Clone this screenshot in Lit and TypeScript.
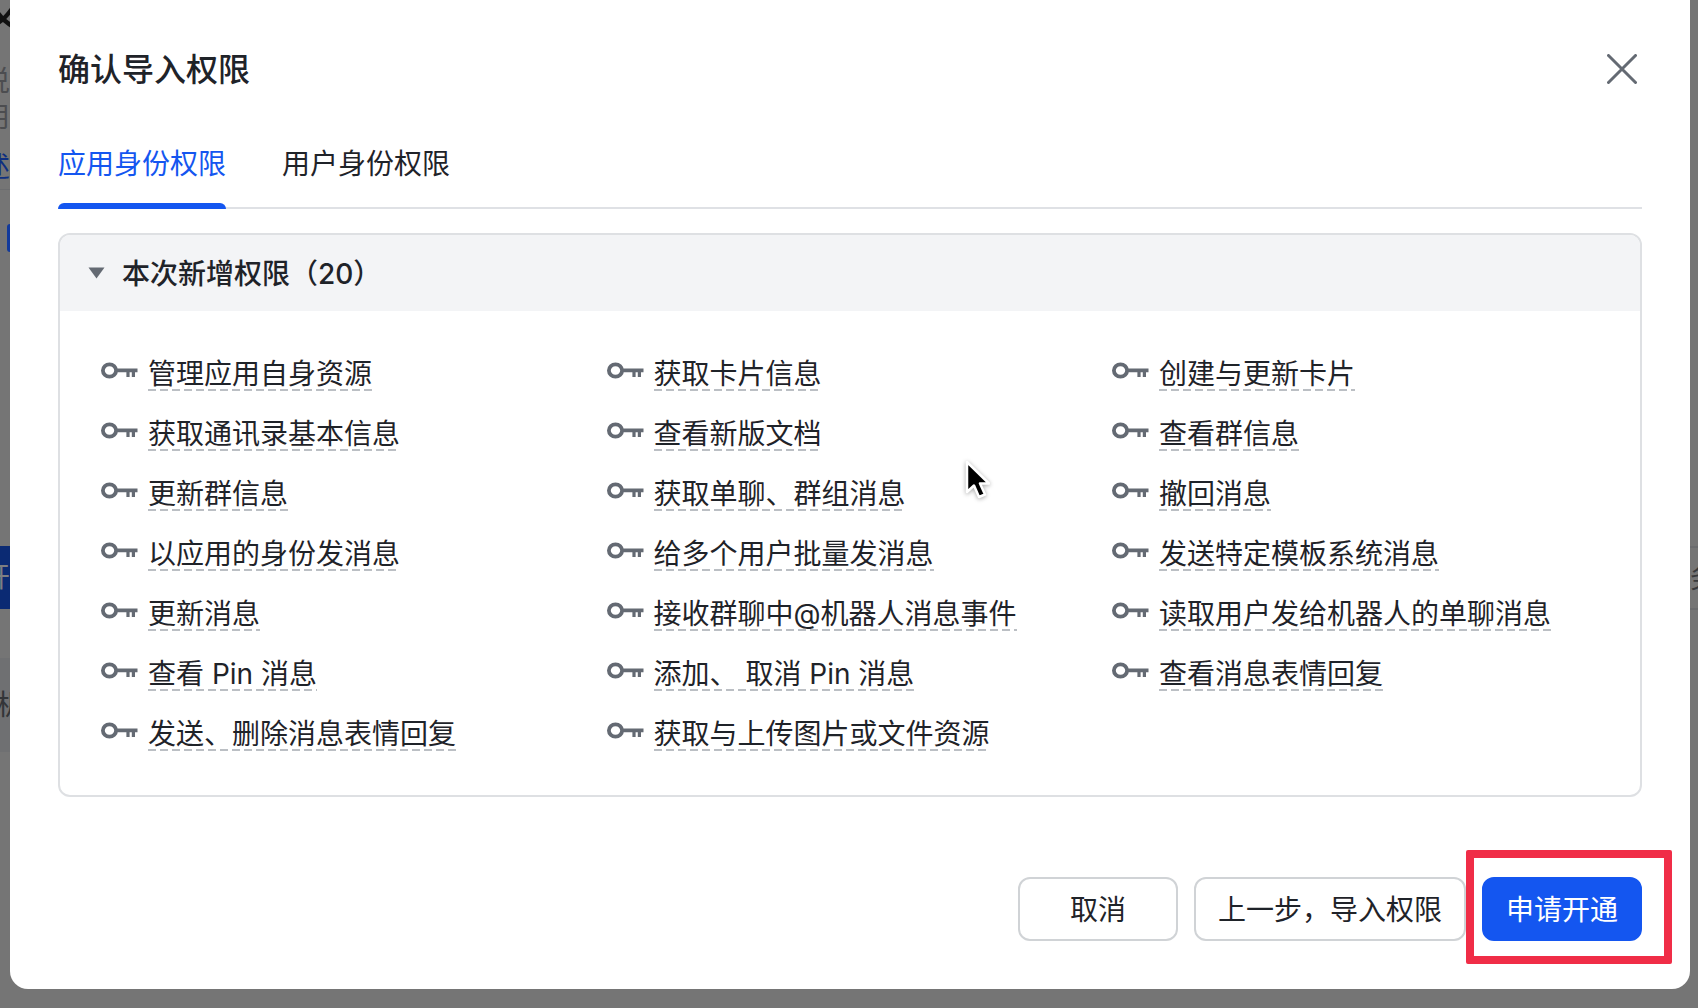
import { LitElement, html, css, svg } from "lit";
import { customElement } from "lit/decorators.js";

const ITEMS = [
  "管理应用自身资源", "获取卡片信息", "创建与更新卡片",
  "获取通讯录基本信息", "查看新版文档", "查看群信息",
  "更新群信息", "获取单聊、群组消息", "撤回消息",
  "以应用的身份发消息", "给多个用户批量发消息", "发送特定模板系统消息",
  "更新消息", "接收群聊中@机器人消息事件", "读取用户发给机器人的单聊消息",
  "查看 Pin 消息", "添加、 取消 Pin 消息", "查看消息表情回复",
  "发送、删除消息表情回复", "获取与上传图片或文件资源",
];

const keyIcon = svg`<svg class="key" width="37" height="17" viewBox="0 0 37 17" fill="none">
  <ellipse cx="8.5" cy="8.5" rx="6.6" ry="6.2" stroke="#646a73" stroke-width="3.8"/>
  <path d="M15 6.5H36.5V10.2H34V15H30.8V10.2H28.6V15H25.4V10.2H15Z" fill="#646a73"/>
</svg>`;

@customElement("app-root")
export class AppRoot extends LitElement {
  static styles = css`
    :host {
      display: grid;
      grid-template-columns: 10px 1680px 8px;
      grid-template-rows: 989px 19px;
      width: 1698px;
      height: 1008px;
      overflow: hidden;
      background: #757575;
      position: relative;
      font-family: Inter, "Noto Sans CJK SC", sans-serif;
      color: #1f2329;
    }
    .strip {
      grid-row: 1 / span 2;
      overflow: hidden;
      display: flex;
      flex-direction: column;
      font-size: 28px;
      line-height: 34px;
      white-space: nowrap;
      color: #3f4144;
    }
    .frag { flex: none; display: block; }
    .lx { margin-left: -18px; }
    .blue { color: #0f2f80; }
    .s1 { height: 44px; margin-top: -18px; margin-left: -25px; font-size: 56px; color: #111; line-height: 56px; }
    .s2 { margin-top: 38px; height: 34px; color: #4c4d50; }
    .s3 { margin-top: 2px; height: 34px; color: #4c4d50; }
    .s4 { margin-top: 16px; height: 30px; }
    .rule { flex: none; height: 1px; background: #6c6d6f; }
    .s5 { margin-top: 9px; }
    .edge { flex: none; width: 4px; height: 28px; margin-top: 34px; margin-left: 7px; background: #123a9c; border-radius: 3px 0 0 3px; }
    .block { flex: none; height: 63px; margin-top: 294px; background: #0b2a73; color: #7e7f82; line-height: 63px; overflow: hidden; }
    .block span { margin-left: -18px; display: block; }
    .band { flex: none; margin-top: 49px; height: 94px; background: #6f7072; color: #333538; line-height: 94px; }
    .band span { margin-left: -4px; display: block; }

    .right { grid-column: 3; }
    .right .r1 { margin-top: 546px; height: 2px; background: #6b6c6e; flex: none; }
    .right .r2 { height: 60px; line-height: 60px; flex: none; color: #38393c; }
    .right .r3 { height: 2px; background: #6b6c6e; flex: none; }

    .modal {
      grid-column: 2;
      grid-row: 1;
      background: #fff;
      border-radius: 18px;
      margin-top: -18px;
      padding: 18px 48px 0;
      display: flex;
      flex-direction: column;
      box-sizing: border-box;
      height: 1007px;
    }
    .head {
      display: flex;
      align-items: center;
      justify-content: space-between;
      height: 44px;
      margin-top: 48px;
    }
    .title { font-size: 32px; font-weight: 500; line-height: 44px; }
    .close { width: 30px; height: 30px; margin: -2px 5px 0 0; display: block; }
    .tabs {
      display: flex;
      gap: 56px;
      margin-top: 28px;
      border-bottom: 2px solid #dfe1e5;
      height: 89px;
      box-sizing: border-box;
    }
    .tab {
      font-size: 28px;
      line-height: 40px;
      height: 87px;
      padding-top: 24px;
      box-sizing: border-box;
      position: relative;
    }
    .tab.on { color: #1456f0; }
    .tab.on::after {
      content: "";
      position: absolute;
      left: 0;
      right: 0;
      bottom: -2px;
      height: 6px;
      background: #1456f0;
      border-radius: 6px 6px 0 0;
    }
    .panel {
      margin-top: 24px;
      height: 564px;
      border: 2px solid #dee0e3;
      border-radius: 12px;
      box-sizing: border-box;
      overflow: hidden;
    }
    .phead {
      height: 76px;
      background: #f3f4f6;
      display: flex;
      align-items: center;
      padding: 0 0 2px 28px;
      box-sizing: border-box;
      gap: 17px;
      font-size: 28px;
      font-weight: 500;
    }
    .caret { width: 17px; height: 12px; display: block; margin-top: 2px; }
    .grid {
      display: grid;
      grid-template-columns: repeat(3, 505.5px);
      grid-auto-rows: 60px;
      padding: 31px 0 0 41px;
    }
    .item {
      display: flex;
      align-items: center;
      gap: 10px;
      font-size: 28px;
      height: 60px;
    }
    .key { flex: none; margin-top: -3px; }
    .label {
      line-height: 34px;
      padding-top: 4px;
      background-image: linear-gradient(to right, #bbbfc4 0 8px, transparent 8px 12px);
      background-size: 12px 2px;
      background-repeat: repeat-x;
      background-position: 0 100%;
      white-space: pre;
    }
    .actions {
      display: flex;
      justify-content: flex-end;
      gap: 16px;
      margin-top: 80px;
    }
    .btn {
      height: 64px;
      box-sizing: border-box;
      border-radius: 12px;
      border: 2px solid #d0d3d6;
      background: #fff;
      font: inherit;
      font-size: 28px;
      color: #1f2329;
      padding: 0 0 2px;
      display: flex;
      align-items: center;
      justify-content: center;
    }
    .cancel { width: 160px; }
    .prev { width: 272px; }
    .primary { width: 160px; background: #1456f0; border-color: #1456f0; color: #fff; }
    .mark {
      position: absolute;
      left: 1466px;
      top: 850px;
      width: 206px;
      height: 114px;
      box-sizing: border-box;
      border: 8px solid #f02d47;
      border-radius: 2px;
    }
    .cursor {
      position: absolute;
      left: 960px;
      top: 458px;
      width: 30px;
      height: 44px;
      filter: drop-shadow(0 1px 2px rgba(0,0,0,.35));
    }
  `;

  render() {
    return html`
      <div class="strip">
        <span class="frag s1">又</span>
        <span class="frag lx s2">说</span>
        <span class="frag lx s3">用</span>
        <span class="frag lx s4 blue">述</span>
        <div class="rule s5"></div>
        <div class="edge"></div>
        <div class="block"><span>开</span></div>
        <div class="band"><span>机</span></div>
      </div>
      <div class="modal">
        <div class="head">
          <div class="title">确认导入权限</div>
          <svg class="close" viewBox="0 0 30 30" fill="none" stroke="#646a73" stroke-width="3" stroke-linecap="round">
            <path d="M1.5 1.5L28.5 28.5M28.5 1.5L1.5 28.5"/>
          </svg>
        </div>
        <div class="tabs">
          <div class="tab on">应用身份权限</div>
          <div class="tab">用户身份权限</div>
        </div>
        <div class="panel">
          <div class="phead">
            <svg class="caret" viewBox="0 0 17 12"><path d="M0.5 0.5H16.5L8.5 11.5Z" fill="#646a73"/></svg>
            <span>本次新增权限（20）</span>
          </div>
          <div class="grid">
            ${ITEMS.map(
              (t) => html`<div class="item">${keyIcon}<span class="label">${t}</span></div>`
            )}
          </div>
        </div>
        <div class="actions">
          <button class="btn cancel">取消</button>
          <button class="btn prev">上一步，导入权限</button>
          <button class="btn primary">申请开通</button>
        </div>
      </div>
      <div class="strip right">
        <div class="r1"></div>
        <div class="r2">务</div>
        <div class="r3"></div>
      </div>
      <div class="mark"></div>
      <svg class="cursor" viewBox="0 0 30 44">
        <path d="M7 4V34L14 27.5L19 39L25 36.5L20 25.5H29Z" fill="#000" stroke="#fff" stroke-width="2.5" stroke-linejoin="round"/>
      </svg>
    `;
  }
}
